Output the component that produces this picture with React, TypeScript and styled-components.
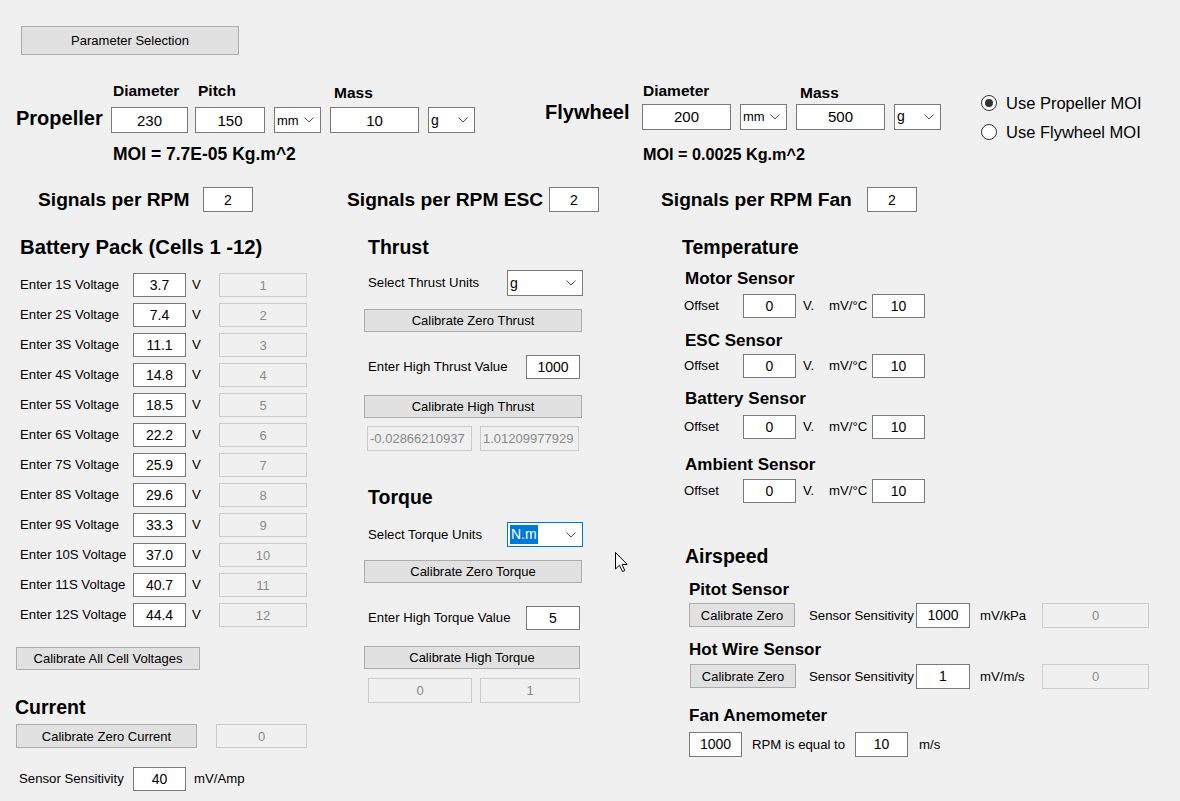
import React from "react";
import styled, { createGlobalStyle, css } from "styled-components";

const FONT = `"Liberation Sans", Arial, Helvetica, sans-serif`;

const GlobalStyle = createGlobalStyle`
  html, body { margin: 0; padding: 0; background: #f0f0f0; }
  body { font-family: ${FONT}; font-size: 13px; color: #000; }
  *, *::before, *::after { box-sizing: border-box; }
`;

type Sp = { $mt?: number; $ml?: number };
const spacing = css<Sp>`
  margin-top: ${(p) => p.$mt ?? 0}px;
  margin-left: ${(p) => p.$ml ?? 0}px;
`;

const Page = styled.div`
  position: relative;
  width: 1180px;
  height: 801px;
  overflow: hidden;
  background: #f0f0f0;
`;

const TopBar = styled.div`
  padding: 26px 0 0 21px;
`;

const Button = styled.button<Sp & { $w: number; $h?: number }>`
  ${spacing};
  display: block;
  flex: none;
  width: ${(p) => p.$w}px;
  height: ${(p) => p.$h ?? 23}px;
  padding: 0;
  background: #e1e1e1;
  border: 1px solid #adadad;
  border-radius: 0;
  font: 13px ${FONT};
  color: #000;
`;

const Box = styled.input<Sp & { $w: number; $h?: number; $fs?: number }>`
  ${spacing};
  flex: none;
  width: ${(p) => p.$w}px;
  height: ${(p) => p.$h ?? 24}px;
  padding: 0 1px;
  background: #fff;
  border: 1px solid #7a7a7a;
  border-radius: 0;
  outline: none;
  font: ${(p) => p.$fs ?? 14}px ${FONT};
  color: #000;
  text-align: center;
`;

const ReadBox = styled(Box)<{ $left?: boolean }>`
  background: #f0f0f0;
  border-color: #cccccc;
  color: #8a8a8a;
  font-size: 13px;
  text-align: ${(p) => (p.$left ? "left" : "center")};
  padding: 0 2px;
`;

const Label = styled.span<{ $w?: number; $pl?: number }>`
  display: block;
  flex: none;
  width: ${(p) => (p.$w ? `${p.$w}px` : "auto")};
  padding-left: ${(p) => p.$pl ?? 0}px;
  white-space: nowrap;
  font-size: 13.2px;
`;

const Line = styled.div<Sp & { $h: number }>`
  ${spacing};
  display: flex;
  align-items: center;
  height: ${(p) => p.$h}px;
  line-height: ${(p) => p.$h}px;
`;

/* ---------- header: propeller / flywheel / radios ---------- */

const HeaderRow = styled.div`
  display: flex;
  align-items: flex-start;
  margin-top: 27px;
`;

const Part = styled.div<Sp>`
  ${spacing};
  display: flex;
  align-items: flex-start;
`;

const PartTitle = styled.div<{ $w: number; $mt: number }>`
  width: ${(p) => p.$w}px;
  margin-top: ${(p) => p.$mt}px;
  font: bold 20px/22px ${FONT};
`;

const PartBody = styled.div`
  display: flex;
  flex-direction: column;
`;

const FieldRow = styled.div`
  display: flex;
  align-items: flex-start;
`;

const Field = styled.div<Sp>`
  ${spacing};
  display: flex;
  flex-direction: column;
`;

const FieldLabel = styled.div<{ $pl?: number; $drop?: number; $gap: number }>`
  height: 18px;
  padding-left: ${(p) => p.$pl ?? 0}px;
  margin-top: ${(p) => p.$drop ?? 0}px;
  margin-bottom: ${(p) => p.$gap - (p.$drop ?? 0)}px;
  font: bold 15.5px/18px ${FONT};
  white-space: nowrap;
`;

const Moi = styled.div<{ $fs: number; $mt: number; $pl: number }>`
  margin-top: ${(p) => p.$mt}px;
  padding-left: ${(p) => p.$pl}px;
  font: bold ${(p) => p.$fs}px/20px ${FONT};
  white-space: nowrap;
`;

const Combo = styled.div<{ $w: number; $h?: number; $focus?: boolean; $fs?: number }>`
  display: flex;
  flex: none;
  align-items: center;
  justify-content: space-between;
  width: ${(p) => p.$w}px;
  height: ${(p) => p.$h ?? 26}px;
  padding: 0 6px 0 2px;
  background: #fff;
  border: 1px solid ${(p) => (p.$focus ? "#0078d7" : "#7a7a7a")};
  font-size: ${(p) => p.$fs ?? 14}px;
  line-height: 19px;
`;

const Picked = styled.span`
  background: #0078d7;
  color: #fff;
  padding: 0 1px;
`;

const Chevron = () => (
  <svg width="10" height="6" viewBox="0 0 10 6">
    <path d="M0.5 0.5 L5 5 L9.5 0.5" fill="none" stroke="#505050" strokeWidth="1" />
  </svg>
);

const RadioGroup = styled.div`
  display: flex;
  flex-direction: column;
  gap: 6.5px;
  margin: 10px 0 0 40px;
`;

const RadioRow = styled.label`
  display: flex;
  align-items: center;
  gap: 9px;
  height: 22px;
  font: 16.5px/22px ${FONT};
  white-space: nowrap;
`;

const RadioDot = styled.span<{ $on?: boolean }>`
  position: relative;
  flex: none;
  width: 16px;
  height: 16px;
  border: 1px solid #333;
  border-radius: 50%;
  background: #fff;
  ${(p) =>
    p.$on &&
    css`
      &::after {
        content: "";
        position: absolute;
        left: 3px;
        top: 3px;
        width: 8px;
        height: 8px;
        border-radius: 50%;
        background: #333;
      }
    `}
`;

/* ---------- body columns ---------- */

const Body = styled.div`
  display: grid;
  grid-template-columns: 332px 314px 1fr;
  align-items: start;
  margin-top: 23px;
  padding-left: 15px;
`;

const Column = styled.div`
  display: flex;
  flex-direction: column;
  align-items: flex-start;
`;

const SignalRow = styled.div<{ $pl?: number }>`
  display: flex;
  align-items: center;
  height: 25px;
  padding-left: ${(p) => p.$pl ?? 0}px;
`;

const SignalLabel = styled.span<{ $w: number }>`
  width: ${(p) => p.$w}px;
  font: bold 19.2px/25px ${FONT};
  white-space: nowrap;
`;

const Heading = styled.div<Sp & { $fs?: number }>`
  ${spacing};
  font: bold ${(p) => p.$fs ?? 19.5}px/22px ${FONT};
  white-space: nowrap;
`;

const SubHeading = styled.div<Sp>`
  ${spacing};
  font: bold 17px/20px ${FONT};
  white-space: nowrap;
`;

const CellList = styled.div`
  display: flex;
  flex-direction: column;
  gap: 6px;
  margin: 15px 0 0 5px;
`;

const CellRow = styled.div`
  display: grid;
  grid-template-columns: 113px 53px 33px 88px;
  align-items: center;
  height: 24px;
  line-height: 24px;
`;

const Pointer = styled.svg`
  position: absolute;
  left: 615px;
  top: 552px;
`;

const volts = ["3.7", "7.4", "11.1", "14.8", "18.5", "22.2", "25.9", "29.6", "33.3", "37.0", "40.7", "44.4"];

type SensorProps = { name: string; mt: number; rowMt: number };
function TempSensor({ name, mt, rowMt }: SensorProps) {
  return (
    <>
      <SubHeading $mt={mt} $ml={24}>{name}</SubHeading>
      <Line $mt={rowMt} $ml={23} $h={24}>
        <Label $w={59}>Offset</Label>
        <Box $w={53} defaultValue="0" />
        <Label $w={33} $pl={7}>V.</Label>
        <Label $w={43}>mV/°C</Label>
        <Box $w={53} defaultValue="10" />
      </Line>
    </>
  );
}

function App() {
  return (
    <>
      <GlobalStyle />
      <Page>
        <TopBar>
          <Button $w={218} $h={29}>Parameter Selection</Button>
        </TopBar>

        <HeaderRow>
          <Part $ml={16}>
            <PartTitle $w={95} $mt={25}>Propeller</PartTitle>
            <PartBody>
              <FieldRow>
                <Field>
                  <FieldLabel $pl={2} $gap={7}>Diameter</FieldLabel>
                  <Box $w={77} $h={26} $fs={15} defaultValue="230" />
                </Field>
                <Field $ml={7}>
                  <FieldLabel $pl={3} $gap={7}>Pitch</FieldLabel>
                  <Box $w={70} $h={26} $fs={15} defaultValue="150" />
                </Field>
                <Field $ml={9}>
                  <FieldLabel $gap={7} />
                  <Combo $w={47} $fs={13}><span>mm</span><Chevron /></Combo>
                </Field>
                <Field $ml={9}>
                  <FieldLabel $pl={4} $gap={7} $drop={2}>Mass</FieldLabel>
                  <Box $w={89} $h={26} $fs={15} defaultValue="10" />
                </Field>
                <Field $ml={9}>
                  <FieldLabel $gap={7} />
                  <Combo $w={47}><span>g</span><Chevron /></Combo>
                </Field>
              </FieldRow>
              <Moi $fs={17.5} $mt={11} $pl={2}>MOI = 7.7E-05 Kg.m^2</Moi>
            </PartBody>
          </Part>

          <Part $ml={70}>
            <PartTitle $w={97} $mt={19}>Flywheel</PartTitle>
            <PartBody>
              <FieldRow>
                <Field>
                  <FieldLabel $pl={1} $gap={3.5}>Diameter</FieldLabel>
                  <Box $w={89} $h={26} $fs={15} defaultValue="200" />
                </Field>
                <Field $ml={9}>
                  <FieldLabel $gap={3.5} />
                  <Combo $w={47} $fs={13}><span>mm</span><Chevron /></Combo>
                </Field>
                <Field $ml={9}>
                  <FieldLabel $pl={4} $gap={3.5} $drop={2}>Mass</FieldLabel>
                  <Box $w={89} $h={26} $fs={15} defaultValue="500" />
                </Field>
                <Field $ml={9}>
                  <FieldLabel $gap={3.5} />
                  <Combo $w={47}><span>g</span><Chevron /></Combo>
                </Field>
              </FieldRow>
              <Moi $fs={16.2} $mt={14} $pl={1}>MOI = 0.0025 Kg.m^2</Moi>
            </PartBody>
          </Part>

          <RadioGroup>
            <RadioRow><RadioDot $on />Use Propeller MOI</RadioRow>
            <RadioRow><RadioDot />Use Flywheel MOI</RadioRow>
          </RadioGroup>
        </HeaderRow>

        <Body>
          {/* battery / current */}
          <Column>
            <SignalRow $pl={23}>
              <SignalLabel $w={165}>Signals per RPM</SignalLabel>
              <Box $w={50} $h={25} defaultValue="2" />
            </SignalRow>
            <Heading $mt={24} $ml={5} $fs={20.3}>Battery Pack (Cells 1 -12)</Heading>
            <CellList>
              {volts.map((v, i) => (
                <CellRow key={v}>
                  <Label>Enter {i + 1}S Voltage</Label>
                  <Box $w={53} defaultValue={v} />
                  <Label $pl={6}>V</Label>
                  <ReadBox $w={88} disabled defaultValue={String(i + 1)} />
                </CellRow>
              ))}
            </CellList>
            <Button $w={184} $mt={20} $ml={1}>Calibrate All Cell Voltages</Button>
            <Heading $mt={26}>Current</Heading>
            <Line $mt={6} $ml={1} $h={24}>
              <Button $w={181} $h={24}>Calibrate Zero Current</Button>
              <ReadBox $w={91} $ml={19} disabled defaultValue="0" />
            </Line>
            <Line $mt={19} $ml={4} $h={24}>
              <Label $w={114}>Sensor Sensitivity</Label>
              <Box $w={53} defaultValue="40" />
              <Label $pl={8}>mV/Amp</Label>
            </Line>
          </Column>

          {/* thrust / torque */}
          <Column>
            <SignalRow>
              <SignalLabel $w={202}>Signals per RPM ESC</SignalLabel>
              <Box $w={50} $h={25} defaultValue="2" />
            </SignalRow>
            <Heading $mt={24} $ml={21}>Thrust</Heading>
            <Line $mt={12} $ml={21} $h={26}>
              <Label $w={139}>Select Thrust Units</Label>
              <Combo $w={76}><span>g</span><Chevron /></Combo>
            </Line>
            <Button $w={218} $mt={13} $ml={17}>Calibrate Zero Thrust</Button>
            <Line $mt={23} $ml={21} $h={24}>
              <Label $w={158}>Enter High Thrust Value</Label>
              <Box $w={54} defaultValue="1000" />
            </Line>
            <Button $w={218} $mt={16} $ml={17}>Calibrate High Thrust</Button>
            <Line $mt={8} $ml={20} $h={25}>
              <ReadBox $w={105} $h={25} $left disabled defaultValue="-0.02866210937" />
              <ReadBox $w={99} $h={25} $ml={8} $left disabled defaultValue="1.01209977929" />
            </Line>

            <Heading $mt={35} $ml={21}>Torque</Heading>
            <Line $mt={14} $ml={21} $h={25}>
              <Label $w={139}>Select Torque Units</Label>
              <Combo $w={76} $h={25} $focus><Picked>N.m</Picked><Chevron /></Combo>
            </Line>
            <Button $w={218} $mt={13} $ml={17}>Calibrate Zero Torque</Button>
            <Line $mt={23} $ml={21} $h={24}>
              <Label $w={158}>Enter High Torque Value</Label>
              <Box $w={54} defaultValue="5" />
            </Line>
            <Button $w={216} $mt={16} $ml={17}>Calibrate High Torque</Button>
            <Line $mt={9} $ml={21} $h={25}>
              <ReadBox $w={104} $h={25} disabled defaultValue="0" />
              <ReadBox $w={100} $h={25} $ml={8} disabled defaultValue="1" />
            </Line>
          </Column>

          {/* temperature / airspeed */}
          <Column>
            <SignalRow>
              <SignalLabel $w={206}>Signals per RPM Fan</SignalLabel>
              <Box $w={50} $h={25} defaultValue="2" />
            </SignalRow>
            <Heading $mt={24} $ml={21}>Temperature</Heading>
            <TempSensor name="Motor Sensor" mt={11} rowMt={5} />
            <TempSensor name="ESC Sensor" mt={12.5} rowMt={3.5} />
            <TempSensor name="Battery Sensor" mt={11.3} rowMt={5.7} />
            <TempSensor name="Ambient Sensor" mt={16.5} rowMt={3.5} />

            <Heading $mt={42} $ml={24}>Airspeed</Heading>
            <SubHeading $mt={12.6} $ml={28}>Pitot Sensor</SubHeading>
            <Line $mt={3} $ml={28} $h={25}>
              <Button $w={106} $h={24}>Calibrate Zero</Button>
              <Label $w={121} $pl={14}>Sensor Sensitivity</Label>
              <Box $w={54} $h={25} defaultValue="1000" />
              <Label $w={72} $pl={10}>mV/kPa</Label>
              <ReadBox $w={107} $h={25} disabled defaultValue="0" />
            </Line>
            <SubHeading $mt={12.8} $ml={28}>Hot Wire Sensor</SubHeading>
            <Line $mt={3.2} $ml={28} $h={25}>
              <Button $w={106} $h={24} $ml={1}>Calibrate Zero</Button>
              <Label $w={120} $pl={13}>Sensor Sensitivity</Label>
              <Box $w={54} $h={25} defaultValue="1" />
              <Label $w={72} $pl={10}>mV/m/s</Label>
              <ReadBox $w={107} $h={25} disabled defaultValue="0" />
            </Line>
            <SubHeading $mt={17} $ml={28}>Fan Anemometer</SubHeading>
            <Line $mt={6} $ml={28} $h={25}>
              <Box $w={53} $h={25} defaultValue="1000" />
              <Label $w={113} $pl={10}>RPM is equal to</Label>
              <Box $w={53} $h={25} defaultValue="10" />
              <Label $pl={11}>m/s</Label>
            </Line>
          </Column>
        </Body>

        <Pointer width="13" height="21" viewBox="0 0 13 21">
          <path d="M0.5 0.5 V17 L4.5 13.2 L7.4 19.6 L9.8 18.6 L7 12.4 H12.2 Z" fill="#fff" stroke="#000" strokeWidth="1" />
        </Pointer>
      </Page>
    </>
  );
}

export default App;
